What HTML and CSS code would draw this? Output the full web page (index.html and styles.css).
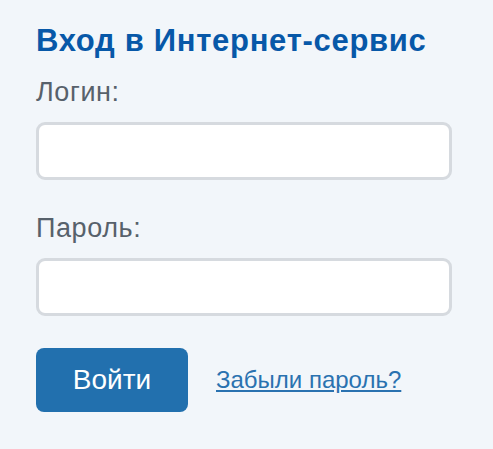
FILE: index.html
```html
<!DOCTYPE html>
<html lang="ru">

<head>
  <meta charset="UTF-8" />
  <meta name="viewport" content="width=device-width, initial-scale=1.0" />
  <title>Вход</title>
  <link rel="stylesheet" href="styles.css">
</head>

<body>
  <form class="login">
    <h1 class="title">Вход в Интернет-сервис</h1>
    <label class="label" for="login">Логин:</label>
    <input class="field" id="login" type="text" />
    <label class="label" for="pass">Пароль:</label>
    <input class="field" id="pass" type="password" />
    <div class="actions">
      <button class="btn" type="button">Войти</button>
      <a class="forgot" href="#">Забыли пароль?</a>
    </div>
  </form>
</body>

</html>
```

FILE: styles.css
```css
* {
  margin: 0;
  padding: 0;
  box-sizing: border-box;
}

body {
  background-color: #f2f6fa;
  font-family: "Liberation Sans", Arial, sans-serif;
}

.login {
  display: flex;
  flex-direction: column;
  padding: 23px 41px 0 36px;
}

.title {
  font-size: 31px;
  line-height: 36px;
  letter-spacing: 0.7px;
  font-weight: bold;
  color: #0758a8;
}

.label {
  margin-top: 18px;
  font-size: 27px;
  line-height: 30px;
  letter-spacing: 0.6px;
  color: #57616b;
}

.field {
  margin-top: 15px;
  height: 58px;
  border: 3px solid #d6dadf;
  border-radius: 9px;
  background-color: #fff;
  outline: none;
}

#login + .label {
  margin-top: 33px;
}

.actions {
  display: flex;
  align-items: center;
  gap: 28px;
  margin-top: 32px;
}

.btn {
  width: 152px;
  height: 64px;
  border: none;
  border-radius: 8px;
  background-color: #2270ae;
  color: #fff;
  font-family: inherit;
  font-size: 28px;
}

.forgot {
  font-size: 24px;
  color: #2a72b0;
}
```
